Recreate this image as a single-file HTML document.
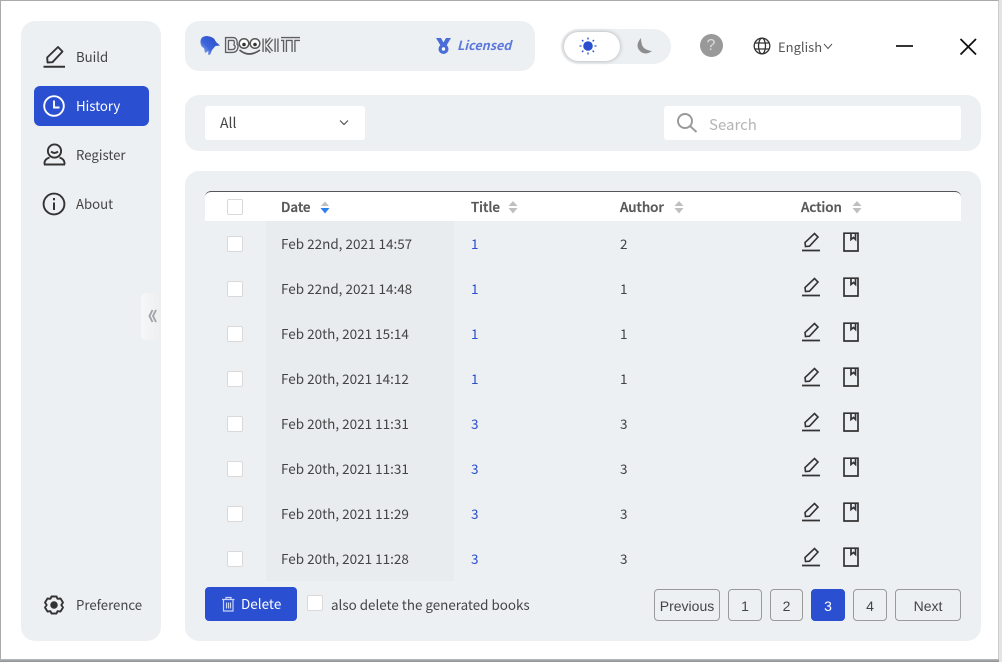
<!DOCTYPE html>
<html><head><meta charset="utf-8">
<style>
*{box-sizing:border-box}
html,body{margin:0;padding:0;width:1002px;height:662px;overflow:hidden;background:#fff}
body{position:relative;font-family:"Noto Sans CJK SC","Liberation Sans",sans-serif;font-size:13.500px;color:#444}
.a{position:absolute}
.p{position:absolute;background:#edf0f3;border-radius:14px}
.t{position:absolute;white-space:nowrap;line-height:20px}
.n{font-size:13.200px}
.cb{position:absolute;width:16px;height:16px;background:#fff;border:1px solid #d9d9d9;border-radius:2px}
.h{font-weight:500;color:#595959;-webkit-text-stroke:.35px #595959;font-size:13.400px}
.pg{position:absolute;top:589px;height:32px;border:1px solid #9a9a9a;border-radius:4px;font-family:"Liberation Sans",sans-serif;font-size:14px;color:#444;text-align:center;line-height:32px;background:#edf0f3}
svg{position:absolute;overflow:visible}
</style></head><body>
<div class="a" style="left:0;top:0;width:999px;height:660px;border-top:1px solid #aaa;border-left:1px solid #aaa;border-right:1px solid #ccc"></div>
<div class="a" style="left:0;top:659px;width:1002px;height:3px;background:linear-gradient(#bbb,#8a8f94)"></div>
<div class="a" style="left:999px;top:0;width:3px;height:662px;background:#e4e4e4"></div>

<div class="p" style="left:21px;top:21px;width:140px;height:620px"></div>
<div class="a" style="left:34px;top:86px;width:115px;height:40px;background:#2a4fd0;border-radius:6px"></div>
<svg style="left:0;top:0" width="200" height="640" fill="none" stroke="#333" stroke-width="1.900">
<path d="M43.500 66.800H65" stroke-width="2"/>
<path d="M47.500 62.500L47.200 57.500L58 47L62.500 51.500L52.500 62.200Z" stroke-linejoin="round"/>
<circle cx="54" cy="106" r="9.800" stroke="#fff"/><path d="M54 100.500V107.500H59.500" stroke="#fff"/>
<circle cx="54.500" cy="151" r="6.600"/><path d="M51 151.500Q54.500 154.500 58 151.500M44.500 164.500V162.500Q45 159 49.500 157.500M64.500 164.500V162.500Q64 159 59.500 157.500M44 164.500H65"/>
<circle cx="54" cy="204" r="10.400"/><path d="M54 202.500V210M54 198V200.200" stroke-width="2"/>
<path d="M51.500 596.500H56.500L57.500 598.800L60.500 598.500L63 602.500L61.300 605L63 607.500L60.500 611.500L57.500 611.200L56.500 613.500H51.500L50.500 611.200L47.500 611.500L45 607.500L46.700 605L45 602.500L47.500 598.500L50.500 598.800Z" stroke-linejoin="round"/>
<circle cx="54" cy="605" r="2.800" fill="#333"/>
</svg>
<div class="t n" style="left:76px;top:47px">Build</div>
<div class="t n" style="left:76px;top:96px;color:#fff">History</div>
<div class="t n" style="left:76px;top:145px">Register</div>
<div class="t n" style="left:76px;top:194px">About</div>
<div class="t n" style="left:76px;top:595px">Preference</div>
<div class="a" style="left:141px;top:293px;width:20px;height:47px;background:linear-gradient(90deg,#f6f7f8,#eceef0);border-radius:5px 0 0 5px"></div>
<svg style="left:0;top:0" width="170" height="340" fill="none" stroke="#a0a4a9" stroke-width="1.900"><path d="M152.500 310L149.500 316L152.500 322M156 310L153 316L156 322"/></svg>

<div class="p" style="left:185px;top:21px;width:350px;height:50px"></div>
<svg style="left:0;top:0" width="320" height="70">
<defs><linearGradient id="b" x1="1" y1="0" x2="0" y2="1"><stop offset="0" stop-color="#2448c8"/><stop offset=".6" stop-color="#3f66dc"/><stop offset="1" stop-color="#a9c4f2"/></linearGradient></defs>
<path d="M200.500 43Q200 36 207 36Q214 36.500 216 42L220 45.500L215.500 46L212 50L210 55L208 54.500L208.500 51L205 53L204 48Q201 47 200.500 43Z" fill="url(#b)"/>
<g fill="none" stroke="#5f5f5f" stroke-width="4.200">
<path d="M227 39H233Q236.500 39 235.500 44.500Q237.500 46 236 49Q235 51 232 51H227Z"/>
<path d="M264.500 38.500V52M266 45.500L271.500 38.500M266 45.500L271.500 52"/>
<path d="M276.500 38.500V52M281 39H300M285 39.500V52M293.500 39.500V52"/>
</g>
<g fill="none" stroke="#edf0f3" stroke-width="1.500">
<path d="M227 39H233Q236.500 39 235.500 44.500Q237.500 46 236 49Q235 51 232 51H227Z"/>
<path d="M264.500 38.500V52M266 45.500L271.500 38.500M266 45.500L271.500 52"/>
<path d="M276.500 38.500V52M281 39H300M285 39.500V52M293.500 39.500V52"/>
</g>
<g fill="#fff" stroke="#555" stroke-width="1.500"><circle cx="244" cy="43.500" r="4.800"/><circle cx="255" cy="43.500" r="4.800"/></g>
<path d="M239.500 50Q249 58 260 50" fill="none" stroke="#555" stroke-width="1.700"/>
<circle cx="244" cy="44.500" r="1.800" fill="#333"/><circle cx="255" cy="44.500" r="1.800" fill="#333"/>
</svg>
<svg style="left:0;top:0" width="460" height="60">
<path d="M436 38H441L443.500 42.500L446 38H451L446.500 45.500H440.500Z" fill="#4a6ed8"/>
<circle cx="443.500" cy="49" r="5" fill="#4a6ed8"/><circle cx="443.500" cy="49" r="1.700" fill="#fff"/>
</svg>
<div class="t" style="left:457px;top:35px;font-size:12.600px;font-style:italic;font-weight:700;color:#5d78dc">Licensed</div>

<div class="a" style="left:561px;top:29px;width:110px;height:35px;background:#edf0f3;border-radius:18px"></div>
<div class="a" style="left:564px;top:32px;width:56px;height:29px;background:#fff;border-radius:15px;box-shadow:0 0 4px #aaa"></div>
<svg style="left:0;top:0" width="670" height="70">
<circle cx="588" cy="46" r="4.800" fill="#2a4fd0"/>
<path d="M588 37.500V39.500M588 52.500V54.500M579.500 46H581.500M594.500 46H596.500M582 40L583.400 41.400M592.600 50.600L594 52M582 52L583.400 50.600M592.600 41.400L594 40" stroke="#2a4fd0" stroke-width="1.300"/>
<path d="M641 38Q634 46 641 52Q646 55.500 652 51Q644 50 642 45Q641 41 641 38Z" fill="#8d8d8d"/>
</svg>

<div class="a" style="left:699.500px;top:34px;width:23px;height:23px;background:#999;border-radius:50%;color:#ddd;text-align:center;font-size:16px;line-height:23px;font-family:'Liberation Sans',sans-serif">?</div>
<svg style="left:0;top:0" width="1000" height="70" fill="none" stroke="#333" stroke-width="1.300">
<circle cx="762" cy="46" r="7.800"/><ellipse cx="762" cy="46" rx="3.500" ry="7.800"/><path d="M754.800 43H769.200M754.800 49H769.200"/>
<path d="M824 44L828 48.500L832 44" stroke="#555" stroke-width="1"/>
<path d="M896 46H913" stroke-width="2"/>
<path d="M960.500 39L976 54.500M976 39L960.500 54.500" stroke="#111" stroke-width="1.800"/>
</svg>
<div class="t" style="left:778px;top:37px;font-size:13px;color:#555">English</div>

<div class="p" style="left:185px;top:95px;width:796px;height:56px"></div>
<div class="a" style="left:205px;top:106px;width:160px;height:34px;background:#fff;border-radius:3px"></div>
<div class="t" style="left:220px;top:113px;font-size:14px">All</div>
<svg style="left:0;top:0" width="360" height="130" fill="none" stroke="#555" stroke-width="1.200"><path d="M340 120.500L344 124.500L348 120.500"/></svg>
<div class="a" style="left:664px;top:106px;width:297px;height:34px;background:#fff;border-radius:3px"></div>
<svg style="left:0;top:0" width="700" height="140" fill="none" stroke="#999" stroke-width="1.900"><circle cx="685" cy="121" r="7"/><path d="M690 126L696.500 132"/></svg>
<div class="t" style="left:709px;top:115px;font-size:15px;color:#b5b5b5">Search</div>

<div class="p" style="left:185px;top:171px;width:796px;height:470px"></div>
<div class="a" style="left:266px;top:221px;width:188px;height:360px;background:#e9ecef"></div>
<div class="a" style="left:205px;top:191px;width:756px;height:30px;background:#fff;border-top:1px solid #555;border-radius:6px 6px 0 0"></div>
<div class="cb" style="left:227px;top:199px"></div>
<div class="t h" style="left:281px;top:196px">Date</div>
<div class="t h" style="left:471px;top:196px">Title</div>
<div class="t h" style="left:620px;top:196px">Author</div>
<div class="t h" style="left:801px;top:196px">Action</div>
<svg style="left:0;top:0" width="900" height="220">
<path d="M325 201.500L329 206H321Z" fill="#bfbfbf"/><path d="M320.500 208H329.500L325 213.500Z" fill="#2f80ed"/>
<g fill="#bfbfbf"><path d="M513 201L517.500 206H508.500Z"/><path d="M508.500 208H517.500L513 213.500Z"/>
<path d="M679 201L683.500 206H674.500Z"/><path d="M674.500 208H683.500L679 213.500Z"/>
<path d="M857 201L861.500 206H852.500Z"/><path d="M852.500 208H861.500L857 213.500Z"/></g>
</svg>

<div class="cb" style="left:227px;top:236px"></div><div class="t" style="left:281px;top:233px">Feb 22nd, 2021 14:57</div><div class="t" style="left:471px;top:233px;color:#2a4fd0">1</div><div class="t" style="left:620px;top:233px">2</div>
<div class="cb" style="left:227px;top:281px"></div><div class="t" style="left:281px;top:278px">Feb 22nd, 2021 14:48</div><div class="t" style="left:471px;top:278px;color:#2a4fd0">1</div><div class="t" style="left:620px;top:278px">1</div>
<div class="cb" style="left:227px;top:326px"></div><div class="t" style="left:281px;top:323px">Feb 20th, 2021 15:14</div><div class="t" style="left:471px;top:323px;color:#2a4fd0">1</div><div class="t" style="left:620px;top:323px">1</div>
<div class="cb" style="left:227px;top:371px"></div><div class="t" style="left:281px;top:368px">Feb 20th, 2021 14:12</div><div class="t" style="left:471px;top:368px;color:#2a4fd0">1</div><div class="t" style="left:620px;top:368px">1</div>
<div class="cb" style="left:227px;top:416px"></div><div class="t" style="left:281px;top:413px">Feb 20th, 2021 11:31</div><div class="t" style="left:471px;top:413px;color:#2a4fd0">3</div><div class="t" style="left:620px;top:413px">3</div>
<div class="cb" style="left:227px;top:461px"></div><div class="t" style="left:281px;top:458px">Feb 20th, 2021 11:31</div><div class="t" style="left:471px;top:458px;color:#2a4fd0">3</div><div class="t" style="left:620px;top:458px">3</div>
<div class="cb" style="left:227px;top:506px"></div><div class="t" style="left:281px;top:503px">Feb 20th, 2021 11:29</div><div class="t" style="left:471px;top:503px;color:#2a4fd0">3</div><div class="t" style="left:620px;top:503px">3</div>
<div class="cb" style="left:227px;top:551px"></div><div class="t" style="left:281px;top:548px">Feb 20th, 2021 11:28</div><div class="t" style="left:471px;top:548px;color:#2a4fd0">3</div><div class="t" style="left:620px;top:548px">3</div>

<svg style="left:0;top:0" width="900" height="600" fill="none" stroke="#333" stroke-width="1.800">
<defs><g id="ic"><path d="M802 250.500H820"/><path d="M805.500 246.500L805 242.500L814.500 233.500L818 237L809.500 246.200Z" stroke-width="1.600"/><path d="M844 233.200H858V251H844ZM851 233V239.500L853.500 237.500L855.500 239.500V233" stroke-width="1.700"/></g></defs>
<use href="#ic"/>
<use href="#ic" y="45"/>
<use href="#ic" y="90"/>
<use href="#ic" y="135"/>
<use href="#ic" y="180"/>
<use href="#ic" y="225"/>
<use href="#ic" y="270"/>
<use href="#ic" y="315"/>
</svg>

<div class="a" style="left:205px;top:587px;width:92px;height:34px;background:#2a4fd0;border-radius:4px"></div>
<svg style="left:0;top:0" width="240" height="620" fill="none" stroke="#c8d3f5" stroke-width="1.200"><path d="M222 599.500H234.500M226 599.500V597.500H231V599.500M223.500 599.500V611H233V599.500M226.500 602.500V608.500M228.500 602.500V608.500M230.500 602.500V608.500"/></svg>
<div class="t" style="left:241px;top:593px;color:#fff">Delete</div>
<div class="cb" style="left:307px;top:595px"></div>
<div class="t" style="left:331px;top:593.500px;font-size:13.400px">also delete the generated books</div>

<div class="pg" style="left:654px;width:66px">Previous</div>
<div class="pg" style="left:728px;width:34px">1</div>
<div class="pg" style="left:770px;width:33px">2</div>
<div class="pg" style="left:811px;width:34px;background:#2a4fd0;border-color:#2a4fd0;color:#fff">3</div>
<div class="pg" style="left:853px;width:34px">4</div>
<div class="pg" style="left:895px;width:66px">Next</div>
</body></html>
